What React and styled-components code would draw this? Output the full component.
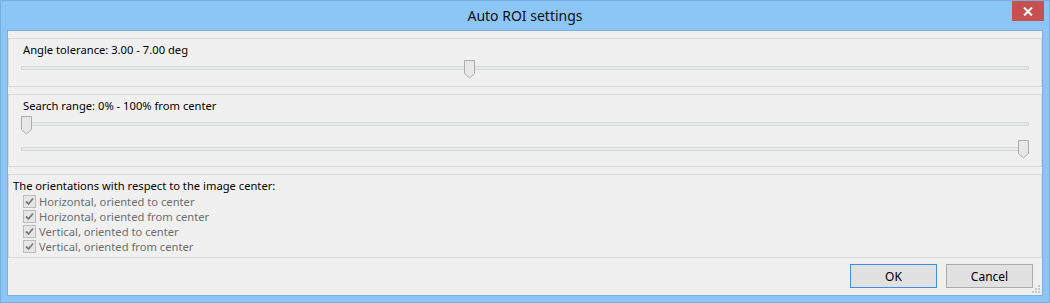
import React from 'react';
import styled, { createGlobalStyle } from 'styled-components';

const GlobalStyle = createGlobalStyle`
  html, body {
    margin: 0;
    padding: 0;
    background: #8cc6f8;
  }
  body {
    font-family: "Noto Sans", "Open Sans", sans-serif;
    font-size: 11.2px;
    color: #000;
  }
`

const Window = styled.div`
  width: 1050px;
  height: 303px;
  box-sizing: border-box;
  border: 1px solid #7aaedf;
  background: #8cc6f8;
  padding: 0 6px 6px 6px;
  display: flex;
  flex-direction: column;
`

const TitleBar = styled.div`
  height: 29px;
  display: grid;
  grid-template-columns: 1fr auto 1fr;
  align-items: start;
`

const Title = styled.div`
  grid-column: 2;
  font-size: 14px;
  line-height: 30px;
  color: #111;
`

const CloseButton = styled.div`
  grid-column: 3;
  justify-self: end;
  width: 32px;
  height: 20px;
  margin-right: -1px;
  background: #c75050;
  display: flex;
  align-items: center;
  justify-content: center;
`

const Client = styled.div`
  flex: 1;
  position: relative;
  border: 1px solid #7eb0df;
  background: #f0f0f0;
  display: flex;
  flex-direction: column;
  gap: 7px;
  padding-top: 7px;
`

const Group = styled.div`
  border: 1px solid #dadada;
  padding: 3px 0 ${p => p.$bottom}px 0;
`

const Label = styled.div`
  line-height: 16px;
  height: 16px;
  padding-left: ${p => p.$indent}px;
  white-space: nowrap;
`

const SliderWrap = styled.div`
  position: relative;
  box-sizing: border-box;
  height: 20px;
  padding-top: ${p => p.$trackTop}px;
  margin: ${p => p.$top}px 12px 0 12px;
`

const Track = styled.div`
  height: 2px;
  border: 1px solid #d6d6d6;
  background: #e7eaea;
`

const Thumb = styled.svg`
  position: absolute;
  top: 0;
  width: 11px;
  height: 19px;
`

const CheckRow = styled.div`
  display: flex;
  align-items: center;
  gap: 3px;
  height: 15px;
  padding-left: 14px;
  color: #6d6d6d;
  white-space: nowrap;
`

const Box = styled.div`
  width: 11px;
  height: 11px;
  border: 1px solid #bcbcbc;
  background: #e6e6e6;
  display: flex;
  align-items: center;
  justify-content: center;
`

const Footer = styled.div`
  display: flex;
  justify-content: flex-end;
  gap: 9px;
  margin-top: -1px;
  padding: 0 9px 0 0;
`

const Button = styled.div`
  width: 85px;
  height: 22px;
  border: 1px solid ${p => (p.$default ? '#3c8fe3' : '#acacac')};
  background: #e1e1e1;
  display: flex;
  align-items: center;
  justify-content: center;
  color: #000;
  font-size: 12px;
`

const Grip = styled.svg`
  position: absolute;
  right: 1px;
  bottom: 1px;
  width: 10px;
  height: 10px;
`

const Slider = ({ value, top, trackTop }) => (
  <SliderWrap $top={top} $trackTop={trackTop}>
    <Track />
    <Thumb viewBox="0 0 11 19" style={{ left: `calc(${value} * (100% - 11px))` }}>
      <path d="M0.5 0.5 H10.5 V13.5 L5.5 18 L0.5 13.5 Z" fill="#e8e8e8" stroke="#acacac" />
    </Thumb>
  </SliderWrap>
);

const Check = ({ children }) => (
  <CheckRow>
    <Box>
      <svg width="9" height="9" viewBox="0 0 9 9">
        <path d="M1 4.5 L3.5 7 L8 1.5" fill="none" stroke="#7a7a7a" strokeWidth="1.8" />
      </svg>
    </Box>
    {children}
  </CheckRow>
);

const App = () => (
  <>
    <GlobalStyle />
    <Window>
      <TitleBar>
        <Title>Auto ROI settings</Title>
        <CloseButton>
          <svg width="10" height="9" viewBox="0 0 10 9">
            <path d="M1 0.5 L9 8.5 M9 0.5 L1 8.5" stroke="#fff" strokeWidth="2" />
          </svg>
        </CloseButton>
      </TitleBar>
      <Client>
        <Group $bottom={6}>
          <Label $indent={14}>Angle tolerance: 3.00 - 7.00 deg</Label>
          <Slider value={0.444} top={2} trackTop={6} />
        </Group>
        <Group $bottom={6}>
          <Label $indent={14}>Search range: 0% - 100% from center</Label>
          <Slider value={0} top={2} trackTop={6} />
          <Slider value={1} top={4} trackTop={7} />
        </Group>
        <Group $bottom={3}>
          <Label $indent={4}>The orientations with respect to the image center:</Label>
          <Check>Horizontal, oriented to center</Check>
          <Check>Horizontal, oriented from center</Check>
          <Check>Vertical, oriented to center</Check>
          <Check>Vertical, oriented from center</Check>
        </Group>
        <Footer>
          <Button $default>OK</Button>
          <Button>Cancel</Button>
        </Footer>
        <Grip viewBox="0 0 10 10">
          <rect x="7" y="1" width="2" height="2" fill="#c8c8c8" />
          <rect x="4" y="4" width="2" height="2" fill="#c8c8c8" />
          <rect x="7" y="4" width="2" height="2" fill="#c8c8c8" />
          <rect x="1" y="7" width="2" height="2" fill="#c8c8c8" />
          <rect x="4" y="7" width="2" height="2" fill="#c8c8c8" />
          <rect x="7" y="7" width="2" height="2" fill="#c8c8c8" />
        </Grip>
      </Client>
    </Window>
  </>
);

export default App;
